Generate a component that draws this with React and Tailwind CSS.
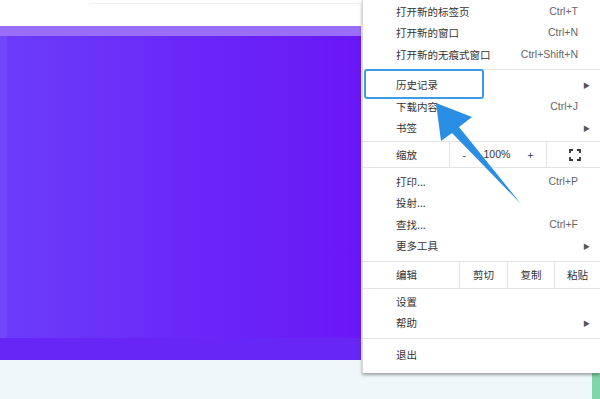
import React from "react";

const cjk = { fontFamily: '"Noto Sans CJK SC", "Noto Sans", sans-serif' };

/* --------- Menu row --------- */
function Item({ label, shortcut, arrow, h = "h-[21.5px]" }) {
  return (
    <div className={`flex items-center ${h} pl-[33px] pr-[10px]`}>
      <span className="flex-1 text-[10.5px] text-[#333]">{label}</span>
      {shortcut && (
        <span
          className="mr-[12px] text-[10.5px] text-[#666]"
          style={{ fontFamily: '"Liberation Sans", Arial, sans-serif' }}
        >
          {shortcut}
        </span>
      )}
      {arrow && <span className="text-[7px] text-[#555]">▶</span>}
    </div>
  );
}

function Divider() {
  return <div className="h-px bg-[#e4e4e4]" />;
}

export default function App() {
  return (
    <div
      className="relative h-[399px] w-[600px] overflow-hidden bg-white"
      style={cjk}
    >
      {/* page behind the menu */}
      <div className="flex h-full flex-col">
        <div className="h-[26px] bg-white pt-[3px]">
          <div className="ml-[90px] h-px w-[270px] bg-[#f0f0f0]" />
        </div>
        <div className="flex h-[334px] w-[361px] flex-col bg-gradient-to-r from-[#6c3cfa] via-[#6a28f8] to-[#6a16f6]">
          <div className="h-[10px] bg-[#9a6ef9]" />
          <div className="flex flex-1">
            <div className="w-[7px] bg-[#7048f9]" />
            <div className="flex-1" />
          </div>
          <div className="h-[22px] bg-[#6826f6]" />
        </div>
        <div className="flex-1 bg-[#eff7fa]" />
      </div>

      {/* green corner */}
      <div className="absolute bottom-0 right-0 h-[28px] w-[8px] bg-[#7fd6a8]" />

      {/* context menu */}
      <div className="absolute right-0 top-0 w-[238px] border-l border-[#d8d8d8] bg-white shadow-[0_2px_3px_rgba(0,0,0,0.35)]">
        <div className="h-[1px]" />
        <Item label="打开新的标签页" shortcut="Ctrl+T" />
        <Item label="打开新的窗口" shortcut="Ctrl+N" />
        <Item label="打开新的无痕式窗口" shortcut="Ctrl+Shift+N" />
        <div className="h-[3px]" />
        <Divider />
        <div className="h-[5px]" />
        <Item label="历史记录" arrow />
        <Item label="下载内容" shortcut="Ctrl+J" />
        <Item label="书签" arrow />
        <div className="h-[2px]" />
        <Divider />
        <div className="flex h-[25px] items-center text-[10.5px] text-[#333]">
          <div className="flex h-full w-[86px] items-center pl-[33px]">缩放</div>
          <div className="flex h-full w-[98px] items-center justify-around border-x border-[#e4e4e4] px-[4px]">
            <span>-</span>
            <span style={{ fontFamily: '"Liberation Sans", Arial, sans-serif' }}>100%</span>
            <span>+</span>
          </div>
          <div className="flex h-full flex-1 items-center justify-center pl-[2px]">
            <svg width="12" height="12" viewBox="0 0 12 12" fill="none" stroke="#333" strokeWidth="1.8">
              <path d="M1 4V1h3M8 1h3v3M11 8v3H8M4 11H1V8" />
            </svg>
          </div>
        </div>
        <Divider />
        <div className="h-[3px]" />
        <Item label="打印..." shortcut="Ctrl+P" />
        <Item label="投射..." />
        <Item label="查找..." shortcut="Ctrl+F" />
        <Item label="更多工具" arrow />
        <div className="h-[4px]" />
        <Divider />
        <div className="flex h-[26px] items-center text-[10.5px] text-[#333]">
          <div className="flex h-full w-[96px] items-center pl-[33px]">编辑</div>
          <div className="flex h-full w-[48px] items-center justify-center border-l border-[#e4e4e4]">剪切</div>
          <div className="flex h-full w-[47px] items-center justify-center border-l border-[#e4e4e4]">复制</div>
          <div className="flex h-full flex-1 items-center justify-center border-l border-[#e4e4e4]">粘贴</div>
        </div>
        <Divider />
        <div className="h-[2px]" />
        <Item label="设置" />
        <Item label="帮助" arrow />
        <div className="h-[4px]" />
        <Divider />
        <div className="h-[5px]" />
        <Item label="退出" />
        <div className="h-[7px]" />
      </div>

      {/* highlight box */}
      <div className="absolute left-[364px] top-[69px] h-[30px] w-[120px] rounded-[3px] border-[2.5px] border-[#3d9be8]" />

      {/* blue arrow */}
      <svg className="absolute left-0 top-0" width="600" height="399" viewBox="0 0 600 399">
        <polygon
          points="436,103 472,117 459,127 521,204 452,133 441,141"
          fill="#2a8ee4"
        />
      </svg>
    </div>
  );
}
